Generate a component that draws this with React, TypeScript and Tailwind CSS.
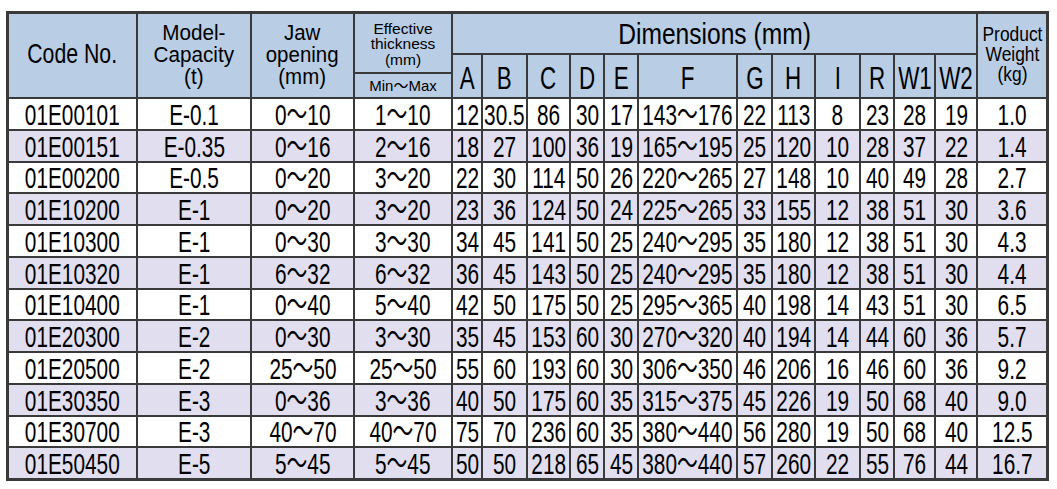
import React from "react";

const rows: string[][] = [
  ["01E00101", "E-0.1", "0〜10", "1〜10", "12", "30.5", "86", "30", "17", "143〜176", "22", "113", "8", "23", "28", "19", "1.0"],
  ["01E00151", "E-0.35", "0〜16", "2〜16", "18", "27", "100", "36", "19", "165〜195", "25", "120", "10", "28", "37", "22", "1.4"],
  ["01E00200", "E-0.5", "0〜20", "3〜20", "22", "30", "114", "50", "26", "220〜265", "27", "148", "10", "40", "49", "28", "2.7"],
  ["01E10200", "E-1", "0〜20", "3〜20", "23", "36", "124", "50", "24", "225〜265", "33", "155", "12", "38", "51", "30", "3.6"],
  ["01E10300", "E-1", "0〜30", "3〜30", "34", "45", "141", "50", "25", "240〜295", "35", "180", "12", "38", "51", "30", "4.3"],
  ["01E10320", "E-1", "6〜32", "6〜32", "36", "45", "143", "50", "25", "240〜295", "35", "180", "12", "38", "51", "30", "4.4"],
  ["01E10400", "E-1", "0〜40", "5〜40", "42", "50", "175", "50", "25", "295〜365", "40", "198", "14", "43", "51", "30", "6.5"],
  ["01E20300", "E-2", "0〜30", "3〜30", "35", "45", "153", "60", "30", "270〜320", "40", "194", "14", "44", "60", "36", "5.7"],
  ["01E20500", "E-2", "25〜50", "25〜50", "55", "60", "193", "60", "30", "306〜350", "46", "206", "16", "46", "60", "36", "9.2"],
  ["01E30350", "E-3", "0〜36", "3〜36", "40", "50", "175", "60", "35", "315〜375", "45", "226", "19", "50", "68", "40", "9.0"],
  ["01E30700", "E-3", "40〜70", "40〜70", "75", "70", "236", "60", "35", "380〜440", "56", "280", "19", "50", "68", "40", "12.5"],
  ["01E50450", "E-5", "5〜45", "5〜45", "50", "50", "218", "65", "45", "380〜440", "57", "260", "22", "55", "76", "44", "16.7"],
];

const letters = ["A", "B", "C", "D", "E", "F", "G", "H", "I", "R", "W1", "W2"];

const hdr = "bg-[#b9cde5] flex items-center justify-center text-center overflow-visible";

export default function App() {
  return (
    <div className="w-[1057px] h-[489px] bg-white pl-[6px] pt-[11px] font-['Liberation_Sans','Noto_Sans_CJK_JP',sans-serif] text-black">
      <div className="inline-grid border-[3px] border-[#3a3a3a] bg-[#3a3a3a] gap-[2px] grid-cols-[127px_112px_101px_96px_28px_43px_41px_32px_32px_97px_33px_41px_43px_32px_39px_40px_68px] grid-rows-[39px_17px_23px_repeat(12,29.75px)]">
        {/* header */}
        <div className={`row-span-3 ${hdr} text-[28px] leading-none`}>
          <span className="inline-block scale-x-[0.76] scale-y-[1.02] whitespace-nowrap -mt-[3px]">Code No.</span>
        </div>
        <div className={`row-span-3 ${hdr} text-[22px] leading-[22px]`}>
          <span className="inline-block scale-x-[0.94] whitespace-nowrap -mt-[2px]">
            Model-
            <br />
            Capacity
            <br />
            (t)
          </span>
        </div>
        <div className={`row-span-3 ${hdr} text-[22px] leading-[22px]`}>
          <span className="inline-block scale-x-[0.93] whitespace-nowrap -mt-[2px]">
            Jaw
            <br />
            opening
            <br />
            (mm)
          </span>
        </div>
        <div className={`row-span-2 ${hdr} text-[15.5px] leading-[15.5px]`}>
          <span className="inline-block whitespace-nowrap mt-[2px]">
            Effective
            <br />
            thickness
            <br />
            (mm)
          </span>
        </div>
        <div className={`col-span-12 ${hdr} text-[30px] leading-none`}>
          <span className="inline-block scale-x-[0.82] whitespace-nowrap">Dimensions (mm)</span>
        </div>
        <div className={`row-span-3 col-start-17 row-start-1 ${hdr} text-[20px] leading-[20px]`}>
          <span className="inline-block scale-x-[0.87] whitespace-nowrap -mt-[4px]">
            Product
            <br />
            Weight
            <br />
            (kg)
          </span>
        </div>
        {letters.map((l, i) => (
          <div
            key={l}
            className={`row-span-2 row-start-2 ${hdr} text-[28px] leading-none`}
            style={{ gridColumnStart: i + 5 }}
          >
            <span className="inline-block scale-x-[0.8] scale-y-[1.15] whitespace-nowrap mt-[6px]">{l}</span>
          </div>
        ))}
        <div className={`col-start-4 row-start-3 ${hdr} text-[15px] leading-none`}>
          <span className="inline-block whitespace-nowrap">Min〜Max</span>
        </div>
        {/* body */}
        {rows.map((r, ri) =>
          r.map((v, ci) => (
            <div
              key={`${ri}-${ci}`}
              className={`${ri % 2 === 1 ? "bg-[#e0deef]" : "bg-white"} flex items-center justify-center text-[26px] leading-none`}
            >
              <span className="inline-block scale-x-[0.8] scale-y-[1.17] whitespace-nowrap">{v}</span>
            </div>
          ))
        )}
      </div>
    </div>
  );
}
